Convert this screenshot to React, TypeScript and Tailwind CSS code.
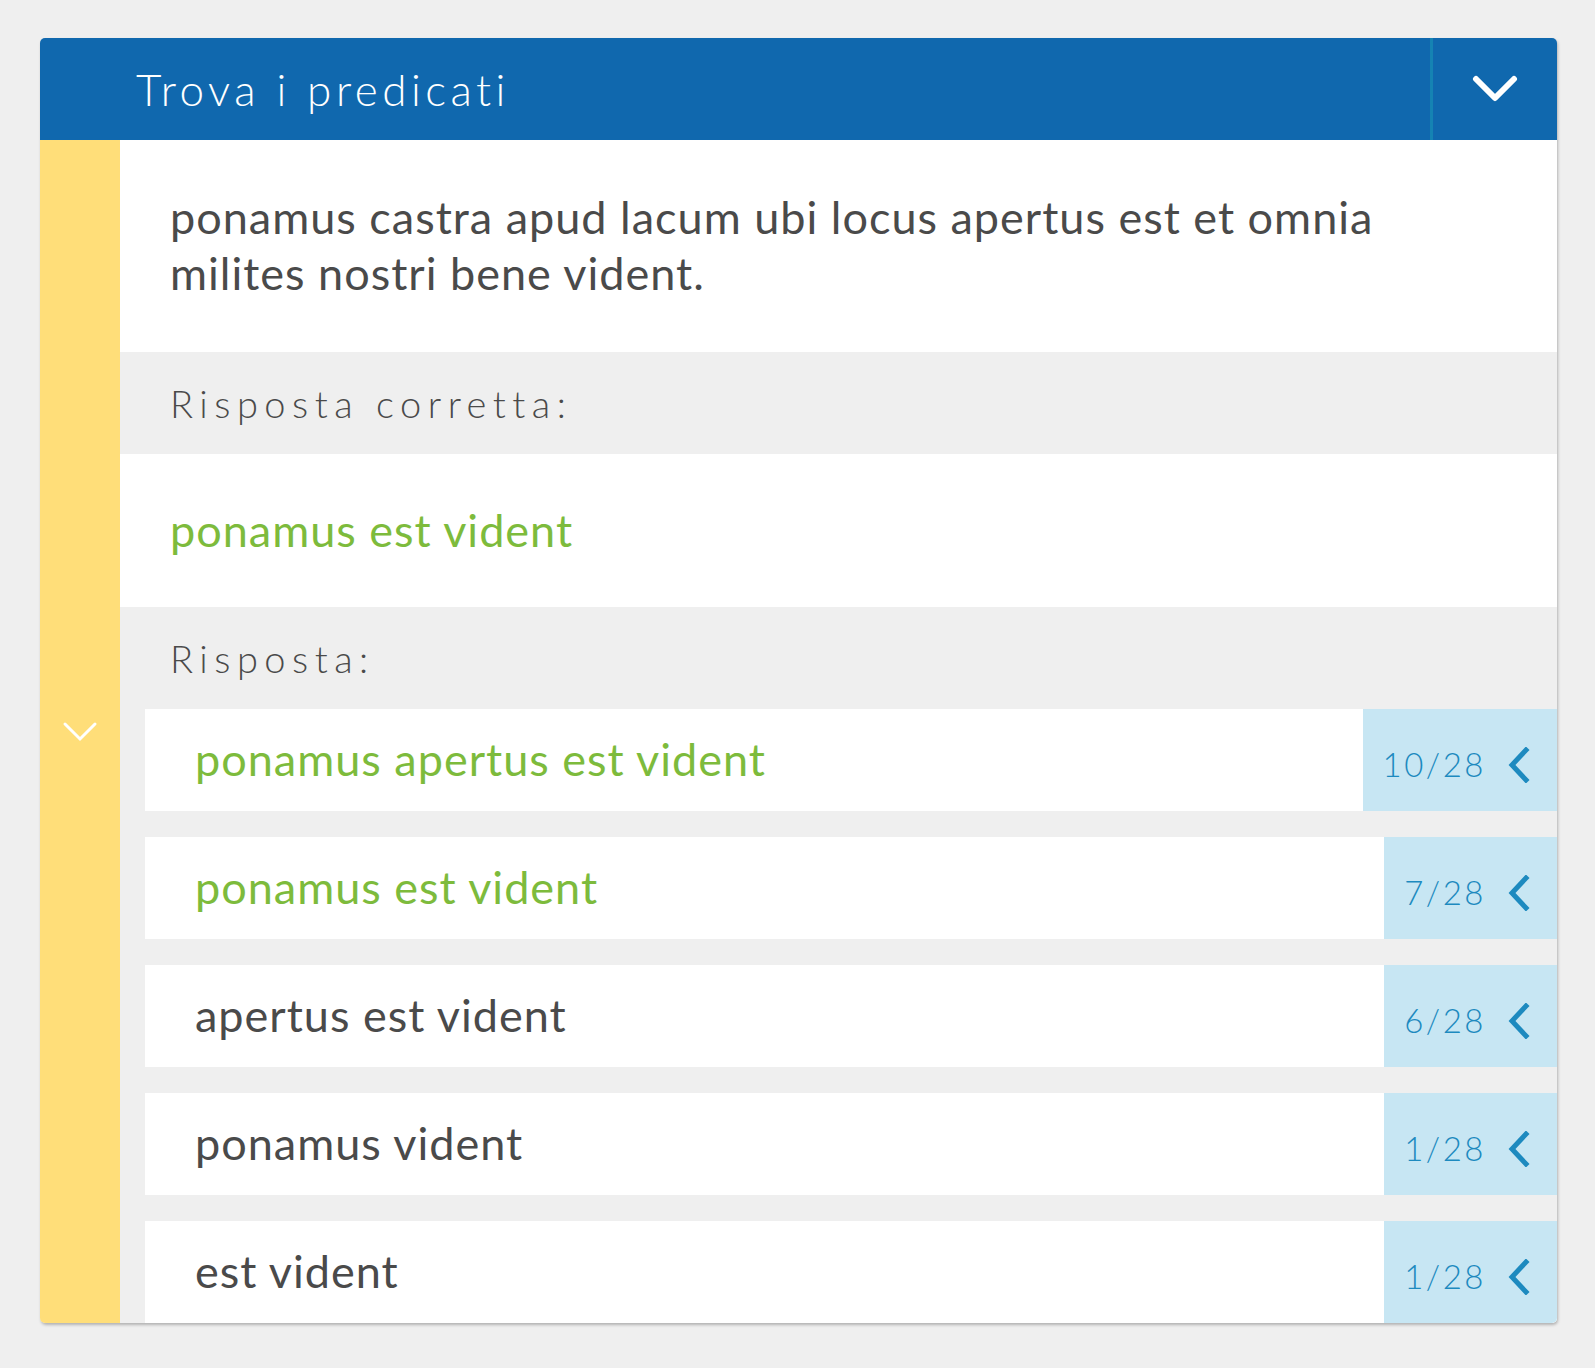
import React from 'react';

type Answer = {
  text: string;
  correct: boolean;
  count: string;
};

const answers: Answer[] = [
  { text: 'ponamus apertus est vident', correct: true, count: '10/28' },
  { text: 'ponamus est vident', correct: true, count: '7/28' },
  { text: 'apertus est vident', correct: false, count: '6/28' },
  { text: 'ponamus vident', correct: false, count: '1/28' },
  { text: 'est vident', correct: false, count: '1/28' },
];

function Chevron({ className, dir = 'down' }: { className?: string; dir?: 'down' | 'left' }) {
  return dir === 'down' ? (
    <svg viewBox="0 0 46 28" className={className} fill="none">
      <path d="M4 4 L23 23 L42 4" stroke="currentColor" strokeWidth="6" strokeLinecap="round" strokeLinejoin="round" />
    </svg>
  ) : (
    <svg viewBox="0 0 22 36" className={className} fill="none">
      <path d="M18 3 L4 18 L18 33" stroke="currentColor" strokeWidth="5" strokeLinecap="square" strokeLinejoin="miter" />
    </svg>
  );
}

function AnswerRow({ answer }: { answer: Answer }) {
  return (
    <div className="flex h-[102px] bg-white">
      <div
        className={
          'flex flex-1 items-center pl-[50px] text-[45px] tracking-[1px] ' +
          (answer.correct ? 'text-[#7dbb3c]' : 'text-[#4a4a4a]')
        }
      >
        {answer.text}
      </div>
      <div className="flex items-center bg-[#c7e6f3] pl-[20px] pr-[27px] pt-[10px] text-[#1d8abf]">
        <span className="text-[33px] font-light tracking-[2.5px]">{answer.count}</span>
        <Chevron dir="left" className="ml-[22px] h-[36px] w-[22px]" />
      </div>
    </div>
  );
}

export default function App() {
  return (
    <div
      className="min-h-screen bg-[#efefef] pb-[46px] pl-[40px] pt-[38px]"
      style={{ fontFamily: 'Lato, "Open Sans", sans-serif' }}
    >
      <div className="w-[1517px] overflow-hidden rounded-[5px] shadow-[1px_2px_3px_rgba(0,0,0,0.25)]">
        <div className="flex h-[102px] bg-[#1068ae] text-white">
          <div className="flex flex-1 items-center pl-[96px] text-[44px] font-light tracking-[4.5px]">
            Trova i predicati
          </div>
          <div className="w-[3px] bg-[#1583b3]" />
          <div className="flex w-[124px] items-center justify-center">
            <Chevron className="h-[28px] w-[46px]" />
          </div>
        </div>

        <div className="flex">
          <div className="flex w-[80px] items-center justify-center bg-[#ffde79] text-white">
            <svg viewBox="0 0 36 22" className="h-[22px] w-[36px]" fill="none">
              <path d="M3 3 L18 18 L33 3" stroke="currentColor" strokeWidth="3" strokeLinecap="round" />
            </svg>
          </div>

          <div className="flex flex-1 flex-col bg-[#efefef]">
            <div className="h-[212px] bg-white pl-[50px] pr-[90px] pt-[49px] text-[45px] leading-[56px] tracking-[1px] text-[#4a4a4a]">
              ponamus castra apud lacum ubi locus apertus est et omnia milites nostri bene vident.
            </div>
            <div className="flex h-[102px] items-center pl-[50px] text-[38px] font-light tracking-[6.5px] text-[#4a4a4a]">
              Risposta corretta:
            </div>
            <div className="flex h-[153px] items-center bg-white pl-[50px] text-[45px] tracking-[1px] text-[#7dbb3c]">
              ponamus est vident
            </div>
            <div className="flex h-[102px] items-center pl-[50px] text-[38px] font-light tracking-[6.5px] text-[#4a4a4a]">
              Risposta:
            </div>
            <div className="flex flex-col gap-[26px] pl-[25px]">
              {answers.map((a, i) => (
                <AnswerRow key={i} answer={a} />
              ))}
            </div>
          </div>
        </div>
      </div>
    </div>
  );
}
